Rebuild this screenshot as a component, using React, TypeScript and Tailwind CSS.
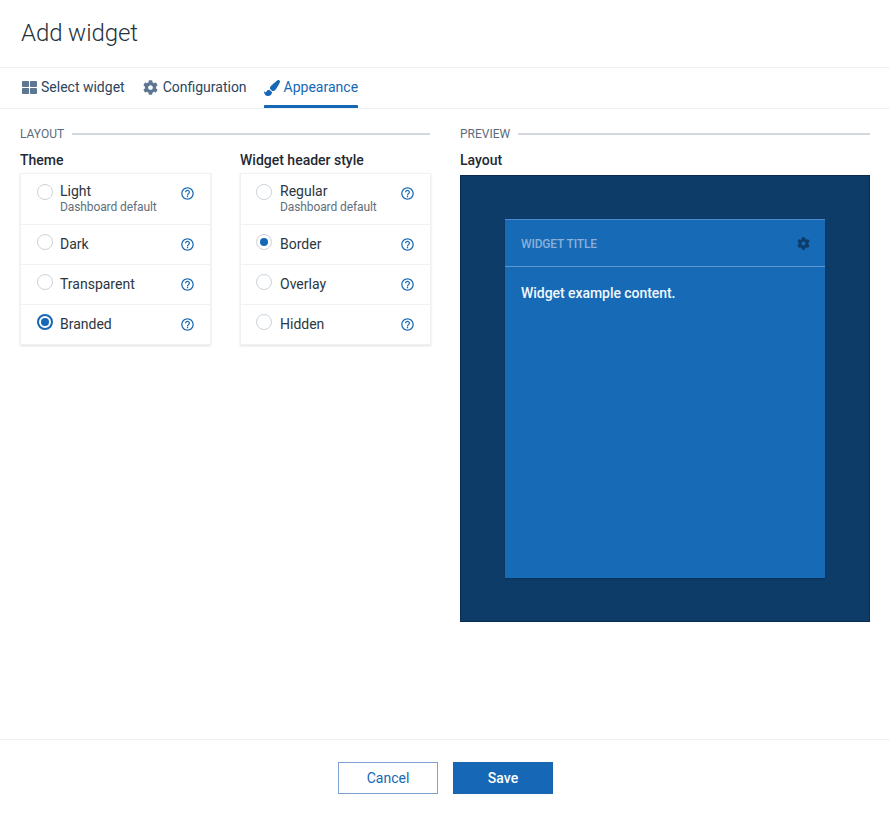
import React from "react";
import { FaCog, FaPaintBrush, FaThLarge } from "react-icons/fa";
import { MdHelpOutline } from "react-icons/md";

function SectionTitle({ label, inset }: { label: string; inset?: boolean }) {
  return (
    <div className={`flex items-center gap-2 h-[18px] ${inset ? "mr-px" : ""}`}>
      <span className="text-[12px] leading-[18px] text-[#5b6b7b]">{label}</span>
      <div className="flex-1 h-[2px] bg-[#d3d8de]" />
    </div>
  );
}

type Opt = { label: string; sub?: string; checked?: "strong" | "soft" };

function Radio({ checked }: { checked?: "strong" | "soft" }) {
  if (checked === "strong") {
    return (
      <span className="w-4 h-4 rounded-full border-2 border-[#1668b6] flex items-center justify-center shrink-0">
        <span className="w-2 h-2 rounded-full bg-[#1668b6]" />
      </span>
    );
  }
  return (
    <span className="w-4 h-4 rounded-full border border-[#ccd3da] flex items-center justify-center shrink-0 bg-white">
      {checked === "soft" && <span className="w-2 h-2 rounded-full bg-[#1668b6]" />}
    </span>
  );
}

function OptionCard({ title, options, tight }: { title: string; options: Opt[]; tight?: boolean }) {
  return (
    <div className="w-[191px]">
      <div className="text-[14px] leading-[20px] font-medium text-[#1f2933] mt-[7px] mb-[3px]">{title}</div>
      <div className="border border-[#f0f1f3] shadow-[0_1px_2px_rgba(30,45,60,0.14)] bg-white">
        {options.map((o, i) => (
          <div
            key={o.label}
            className={`flex items-start pr-[15px] ${tight ? "pl-[15px]" : "pl-4"} ${o.sub ? "h-[50px] pt-[8px]" : "h-[40px] pt-[8px]"} ${i > 0 ? "border-t border-[#f0f1f3]" : ""}`}
          >
            <div className={o.sub ? "mt-[2px]" : "mt-[1px]"}>
              <Radio checked={o.checked} />
            </div>
            <div className={`${tight ? "ml-[8px]" : "ml-[7px]"} flex-1 min-w-0`}>
              <div className={`text-[14px] leading-[18px] text-[#2b3640] ${o.sub ? "" : "mt-[2px]"}`}>{o.label}</div>
              {o.sub && <div className="text-[12px] leading-[14px] tracking-[-0.1px] text-[#5f6f7e]">{o.sub}</div>}
            </div>
            <MdHelpOutline className="text-[#1668b6] text-[15px] shrink-0 mt-[4px]" />
          </div>
        ))}
      </div>
    </div>
  );
}

export default function App() {
  return (
    <div className="w-[890px] h-[815px] bg-white flex flex-col font-['Roboto',sans-serif]">
      <div className="h-[68px] border-b border-[#f0f1f3] flex items-center pl-[21px] pr-5 shrink-0">
        <h1 className="text-[24px] font-light leading-[30px] tracking-[-0.1px] text-[#26313b] mt-[-1px]">Add widget</h1>
      </div>
      <div className="h-[41px] border-b border-[#f0f1f3] flex items-stretch pl-[22px] gap-[18px] text-[14px] shrink-0">
        <div className="flex items-center gap-[4px] text-[#2c4560] mt-[-1px]">
          <FaThLarge className="text-[#5d7691] text-[15px]" />
          <span>Select widget</span>
        </div>
        <div className="flex items-center gap-[5px] text-[#2c4560] mt-[-1px]">
          <FaCog className="text-[#5d7691] text-[15px]" />
          <span>Configuration</span>
        </div>
        <div className="relative flex items-center text-[#1668b6] ml-[-1px]">
          <div className="flex items-center gap-[4px] mt-[-1px]">
            <FaPaintBrush className="text-[16px]" />
            <span>Appearance</span>
          </div>
          <div className="absolute left-0 right-0 bottom-0 h-[3px] bg-[#1668b6] rounded-t-[1px]" />
        </div>
      </div>
      <div className="flex-1 flex pl-5 pr-5 pt-[16px] gap-[29px]">
        <div className="w-[411px]">
          <SectionTitle label="LAYOUT" inset />
          <div className="flex gap-[29px]">
            <OptionCard
              title="Theme"
              options={[
                { label: "Light", sub: "Dashboard default" },
                { label: "Dark" },
                { label: "Transparent" },
                { label: "Branded", checked: "strong" },
              ]}
            />
            <OptionCard
              tight
              title="Widget header style"
              options={[
                { label: "Regular", sub: "Dashboard default" },
                { label: "Border", checked: "soft" },
                { label: "Overlay" },
                { label: "Hidden" },
              ]}
            />
          </div>
        </div>
        <div className="w-[410px]">
          <SectionTitle label="PREVIEW" />
          <div className="text-[14px] leading-[20px] font-medium text-[#1f2933] mt-[7px] mb-[5px]">Layout</div>
          <div className="h-[447px] bg-[#0e3c69] border border-[#0b2a4d] pt-[43px] pl-[44px] pr-[44px]">
            <div className="h-[359px] bg-[#166ab6] border-t border-[#4b8bc9] shadow-[0_1px_2px_rgba(0,0,0,0.2)]">
              <div className="h-[47px] flex items-center justify-between pl-4 pr-[15px] border-b border-[#5c97d0]">
                <span className="text-[12px] font-medium tracking-[-0.15px] text-[#8ab0d9] mt-[1px]">WIDGET TITLE</span>
                <FaCog className="text-[#0e3c69] text-[13px]" />
              </div>
              <div className="pl-4 pr-[15px] pt-[17px] text-[14px] leading-[18px] font-medium tracking-[-0.05px] text-[#f2f7fc]">
                Widget example content.
              </div>
            </div>
          </div>
        </div>
      </div>
      <div className="h-[76px] border-t border-[#f0f1f3] flex justify-center items-start pt-[22px] gap-[15px] shrink-0 pl-[1px]">
        <button className="w-[100px] h-[32px] border border-[#7f9fd0] bg-white text-[14px] text-[#1668b6]">Cancel</button>
        <button className="w-[100px] h-[32px] bg-[#1668b6] border border-[#1a66ae] text-[14px] font-medium text-white">Save</button>
      </div>
    </div>
  );
}
